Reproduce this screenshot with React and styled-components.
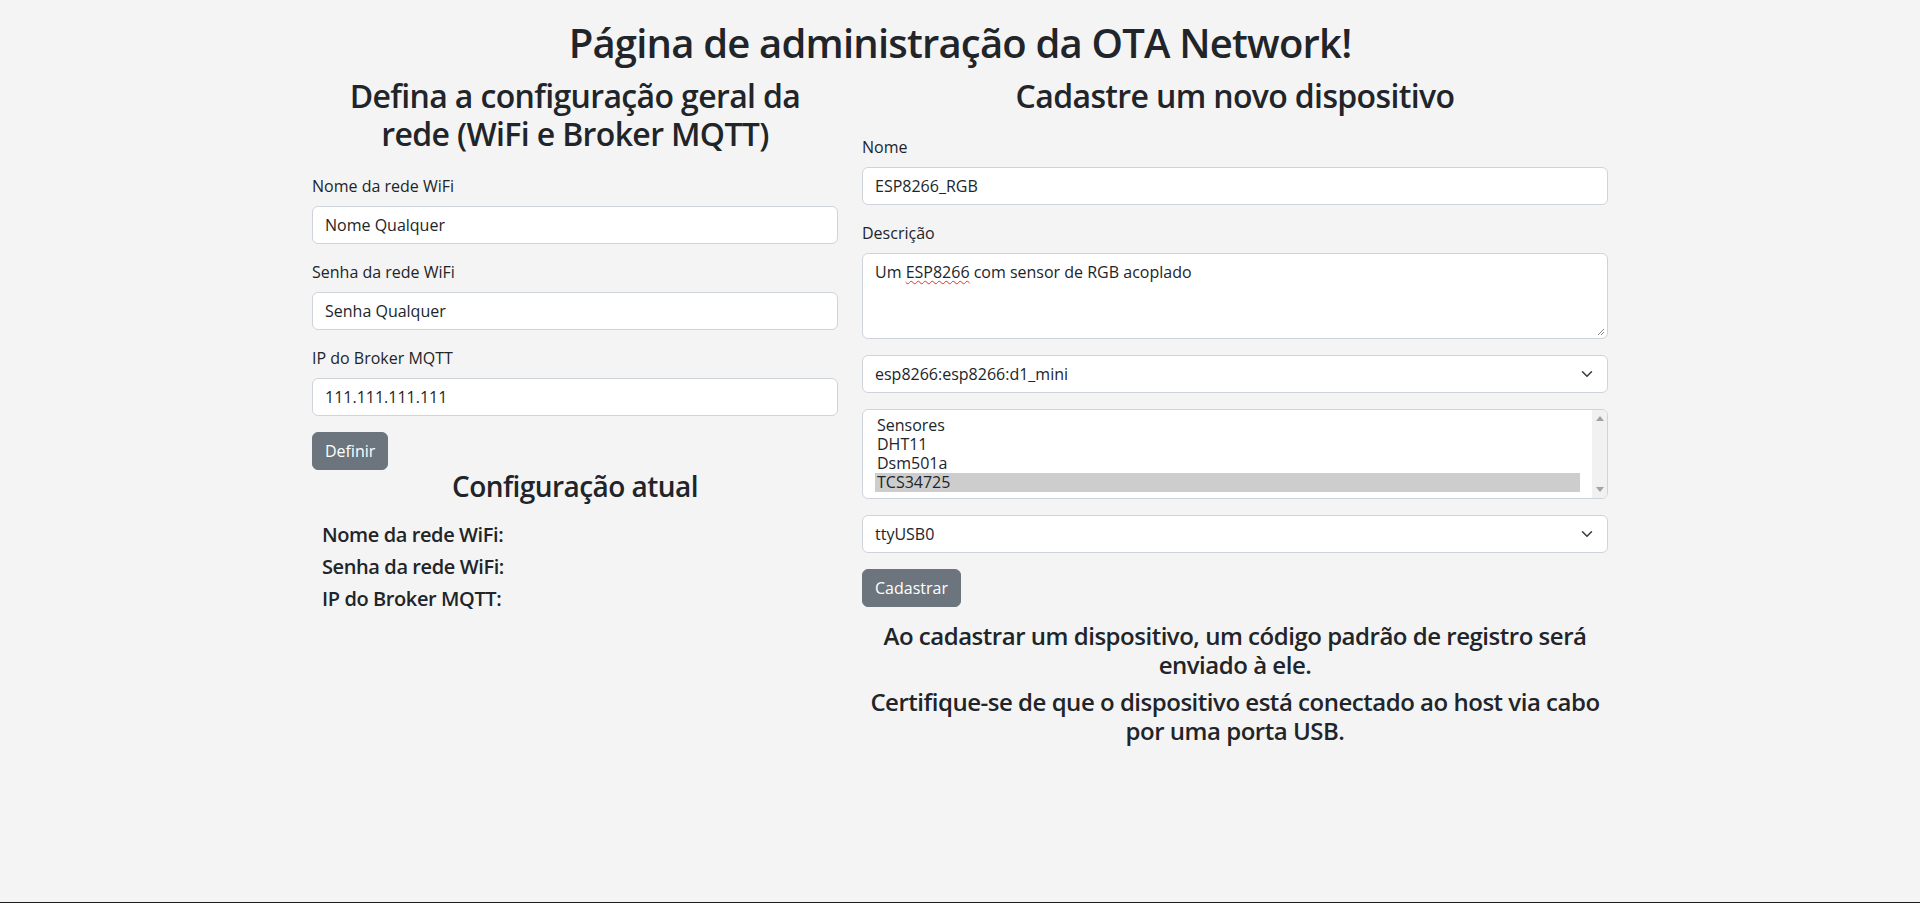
import React from 'react';
import styled, { createGlobalStyle } from 'styled-components';

const GlobalStyle = createGlobalStyle`
  *, *::before, *::after {
    box-sizing: border-box;
  }
  html, body {
    margin: 0;
    padding: 0;
  }
  body {
    background: #f4f4f4;
    color: #212529;
    font-family: "Open Sans", Lato, sans-serif;
    font-size: 16px;
    line-height: 1.5;
  }
`;

const Page = styled.div`
  min-height: 100vh;
  border-bottom: 1px solid #1c1c1c;
`;

const Container = styled.div`
  width: 1320px;
  margin: 0 auto;
  padding: 19px 12px 0;
`;

const Heading = styled.h1`
  margin: 0 0 ${p => p.$gap || 8}px;
  font-size: ${p => p.$size}px;
  font-weight: 600;
  letter-spacing: -0.02em;
  line-height: 1.2;
  text-align: ${p => (p.$left ? 'left' : 'center')};
`;

const Row = styled.div`
  display: flex;
  margin: 0 -12px;
`;

const Col = styled.div`
  flex: 0 0 ${p => (p.$span / 12) * 100}%;
  max-width: ${p => (p.$span / 12) * 100}%;
  padding: 0 12px;
`;

const Form = styled.form`
  padding-top: 12px;
`;

const Field = styled.div`
  margin-bottom: 16px;
`;

const Label = styled.label`
  display: block;
  margin-bottom: 8px;
`;

const Input = styled.input`
  display: block;
  width: 100%;
  padding: 6px 12px;
  font: inherit;
  line-height: 1.5;
  color: #212529;
  background: #fff;
  border: 1px solid #ced4da;
  border-radius: 6px;
  outline: none;
`;

const TextArea = styled.div`
  position: relative;
  height: 86px;
  padding: 6px 12px;
  background: #fff;
  border: 1px solid #ced4da;
  border-radius: 6px;
`;

const Misspelled = styled.span`
  text-decoration: underline wavy #e0312b;
  text-decoration-thickness: 1px;
  text-underline-offset: 2px;
`;

const Grip = styled.svg`
  position: absolute;
  right: 2px;
  bottom: 2px;
`;

const SelectBox = styled.div`
  display: flex;
  align-items: center;
  justify-content: space-between;
  padding: 6px 12px;
  background: #fff;
  border: 1px solid #ced4da;
  border-radius: 6px;
`;

const ListBox = styled.div`
  display: flex;
  height: 90px;
  background: #fff;
  border: 1px solid #ced4da;
  border-radius: 6px;
  overflow: hidden;
`;

const Options = styled.div`
  flex: 1;
  padding: 6px 12px;
`;

const Option = styled.div`
  height: 19px;
  line-height: 19px;
  padding: 0 2px;
  background: ${p => (p.$selected ? '#cdcdcd' : 'transparent')};
`;

const ScrollTrack = styled.div`
  display: flex;
  flex-direction: column;
  align-items: center;
  justify-content: space-between;
  width: 15px;
  padding: 6px 0;
  background: #f1f1f1;
`;

const Button = styled.button`
  padding: 6px 12px;
  font: inherit;
  line-height: 1.5;
  color: #fff;
  background: #6c757d;
  border: 1px solid #6c757d;
  border-radius: 6px;
`;

const ConfigList = styled.div`
  padding: 12px 10px 0;
`;

const Notices = styled.div`
  margin-top: 15px;
`;

const Chevron = () => (
  <svg width="16" height="12" viewBox="0 0 16 16">
    <path d="m2 5 6 6 6-6" fill="none" stroke="#343a40" strokeWidth="2" strokeLinecap="round" strokeLinejoin="round" />
  </svg>
);

const Select = ({ value }) => (
  <SelectBox>
    <span>{value}</span>
    <Chevron />
  </SelectBox>
);

const sensors = ['Sensores', 'DHT11', 'Dsm501a', 'TCS34725'];

const App = () => (
  <Page>
    <GlobalStyle />
    <Container>
      <Heading $size={40} $gap={10}>Página de administração da OTA Network!</Heading>
      <Row>
        <Col $span={5}>
          <Heading as="h2" $size={32}>
            Defina a configuração geral da
            <br />
            rede (WiFi e Broker MQTT)
          </Heading>
          <Form onSubmit={e => e.preventDefault()}>
            <Field>
              <Label>Nome da rede WiFi</Label>
              <Input defaultValue="Nome Qualquer" />
            </Field>
            <Field>
              <Label>Senha da rede WiFi</Label>
              <Input defaultValue="Senha Qualquer" />
            </Field>
            <Field>
              <Label>IP do Broker MQTT</Label>
              <Input defaultValue="111.111.111.111" />
            </Field>
            <Button type="submit">Definir</Button>
          </Form>
          <Heading as="h3" $size={28}>Configuração atual</Heading>
          <ConfigList>
            <Heading as="h5" $size={20} $left>Nome da rede WiFi:</Heading>
            <Heading as="h5" $size={20} $left>Senha da rede WiFi:</Heading>
            <Heading as="h5" $size={20} $left>IP do Broker MQTT:</Heading>
          </ConfigList>
        </Col>
        <Col $span={7}>
          <Heading as="h2" $size={32}>Cadastre um novo dispositivo</Heading>
          <Form onSubmit={e => e.preventDefault()}>
            <Field>
              <Label>Nome</Label>
              <Input defaultValue="ESP8266_RGB" />
            </Field>
            <Field>
              <Label>Descrição</Label>
              <TextArea>
                Um <Misspelled>ESP8266</Misspelled> com sensor de RGB acoplado
                <Grip width="9" height="9" viewBox="0 0 9 9">
                  <path d="M8 2 2 8M8 5 5 8" stroke="#8a8a8a" strokeWidth="1" />
                </Grip>
              </TextArea>
            </Field>
            <Field>
              <Select value="esp8266:esp8266:d1_mini" />
            </Field>
            <Field>
              <ListBox>
                <Options>
                  {sensors.map((s, i) => (
                    <Option key={s} $selected={i === sensors.length - 1}>{s}</Option>
                  ))}
                </Options>
                <ScrollTrack>
                  <svg width="8" height="5" viewBox="0 0 8 5">
                    <path d="M4 0 8 5H0z" fill="#a3a3a3" />
                  </svg>
                  <svg width="8" height="5" viewBox="0 0 8 5">
                    <path d="M0 0h8L4 5z" fill="#a3a3a3" />
                  </svg>
                </ScrollTrack>
              </ListBox>
            </Field>
            <Field>
              <Select value="ttyUSB0" />
            </Field>
            <Button type="submit">Cadastrar</Button>
          </Form>
          <Notices>
            <Heading as="h4" $size={24}>
              Ao cadastrar um dispositivo, um código padrão de registro será enviado à ele.
            </Heading>
            <Heading as="h4" $size={24}>
              Certifique-se de que o dispositivo está conectado ao host via cabo por uma porta USB.
            </Heading>
          </Notices>
        </Col>
      </Row>
    </Container>
  </Page>
);

export default App;
